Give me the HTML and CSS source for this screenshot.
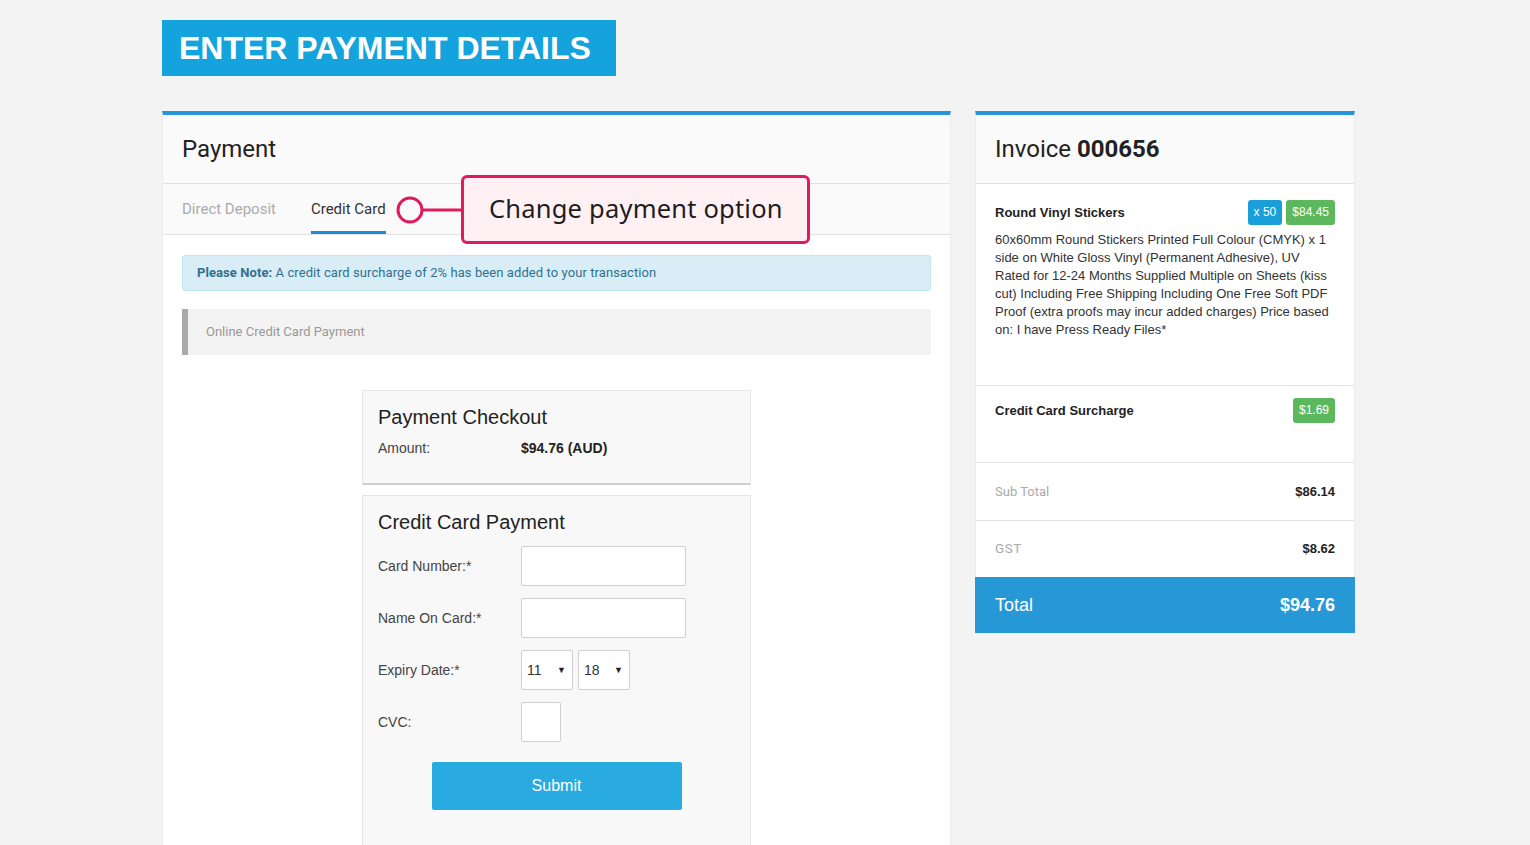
FILE: index.html
```html
<!DOCTYPE html>
<html lang="en">
<head>
<meta charset="utf-8">
<title>Enter Payment Details</title>
<link rel="stylesheet" href="styles.css">
</head>
<body>
<div class="page">
  <h1 class="page-title">ENTER PAYMENT DETAILS</h1>
  <div class="columns">
    <section class="panel panel-left">
      <div class="panel-head">Payment</div>
      <div class="tabs">
        <span class="tab">Direct Deposit</span>
        <span class="tab active">Credit Card</span>
        <div class="callout">
          <svg class="callout-pin" width="66" height="30" viewBox="0 0 66 30">
            <circle cx="15" cy="15" r="12" fill="none" stroke="#e01a5f" stroke-width="3"/>
            <line x1="27" y1="15" x2="66" y2="15" stroke="#e01a5f" stroke-width="3"/>
          </svg>
          <div class="callout-box">Change payment option</div>
        </div>
      </div>
      <div class="panel-body">
        <div class="alert"><b>Please Note:</b> A credit card surcharge of 2% has been added to your transaction</div>
        <div class="method">Online Credit Card Payment</div>
        <div class="checkout">
          <h2 class="box-title">Payment Checkout</h2>
          <div class="amount-row"><span class="lbl">Amount:</span><span class="amount">$94.76 (AUD)</span></div>
        </div>
        <div class="cc-box">
          <h2 class="box-title">Credit Card Payment</h2>
          <div class="form-row"><span class="lbl">Card Number:*</span><span class="input wide"></span></div>
          <div class="form-row"><span class="lbl">Name On Card:*</span><span class="input wide"></span></div>
          <div class="form-row"><span class="lbl">Expiry Date:*</span>
            <span class="select">11<i>&#9660;</i></span>
            <span class="select">18<i>&#9660;</i></span>
          </div>
          <div class="form-row"><span class="lbl">CVC:</span><span class="input small"></span></div>
          <div class="submit-wrap"><button class="submit">Submit</button></div>
        </div>
      </div>
    </section>
    <section class="panel panel-right">
      <div class="panel-head">Invoice <b>000656</b></div>
      <div class="inv-item">
        <div class="item-top">
          <span class="item-name">Round Vinyl Stickers</span>
          <span class="badges"><span class="badge blue">x 50</span><span class="badge green">$84.45</span></span>
        </div>
        <p class="item-desc">60x60mm Round Stickers Printed Full Colour (CMYK) x 1 side on White Gloss Vinyl (Permanent Adhesive), UV Rated for 12-24 Months Supplied Multiple on Sheets (kiss cut) Including Free Shipping Including One Free Soft PDF Proof (extra proofs may incur added charges) Price based on: I have Press Ready Files*</p>
      </div>
      <div class="inv-surcharge">
        <span class="item-name">Credit Card Surcharge</span>
        <span class="badge green">$1.69</span>
      </div>
      <div class="inv-line sub"><span class="muted">Sub Total</span><span class="val">$86.14</span></div>
      <div class="inv-line gst"><span class="muted">GST</span><span class="val">$8.62</span></div>
      <div class="inv-total"><span>Total</span><span class="total-val">$94.76</span></div>
    </section>
  </div>
</div>
</body>
</html>
```

FILE: styles.css
```css
* { box-sizing: border-box; }
html, body { margin: 0; padding: 0; }
body {
  background: #f3f3f3;
  font-family: Roboto, "Liberation Sans", Arial, sans-serif;
  color: #333;
  height: 845px;
  overflow: hidden;
}
.page {
  width: 1193px;
  margin-left: 162px;
  padding-top: 20px;
}
.page-title {
  margin: 0;
  width: 454px;
  height: 56px;
  line-height: 56px;
  padding-left: 17px;
  background: #14a3dc;
  color: #fff;
  font-family: "Liberation Sans", Arial, sans-serif;
  font-weight: bold;
  font-size: 32px;
}
.columns {
  display: flex;
  gap: 24px;
  margin-top: 35px;
  align-items: flex-start;
}
.panel {
  background: #fff;
  border-top: 4px solid #2596d6;
  border-left: 1px solid #ececec;
  border-right: 1px solid #ececec;
}
.panel-left { width: 789px; min-height: 740px; }
.panel-right { width: 380px; }
.panel-head {
  height: 69px;
  line-height: 68px;
  padding-left: 19px;
  font-size: 24px;
  color: #222;
  background: #fafafa;
  border-bottom: 1px solid #e2e2e2;
}
.panel-head b { font-weight: bold; }
.tabs {
  position: relative;
  height: 51px;
  background: #fafafa;
  border-bottom: 1px solid #e2e2e2;
  display: flex;
  gap: 35px;
  padding-left: 19px;
}
.tab {
  font-size: 15px;
  line-height: 47px;
  padding-top: 2px;
  color: #aaa;
  border-bottom: 3px solid transparent;
  height: 50px;
}
.tab.active { color: #333; border-bottom-color: #1a8fd0; }
.callout {
  position: absolute;
  left: 232px;
  top: -9px;
  display: flex;
  align-items: center;
}
.callout-pin { display: block; }
.callout-box {
  width: 349px;
  height: 69px;
  border: 3px solid #e01a5f;
  border-radius: 6px;
  background: #fff0f4;
  font-family: "Noto Sans", "Open Sans", sans-serif;
  font-size: 25.5px;
  color: #1e1e1e;
  line-height: 61px;
  padding-left: 25px;
  letter-spacing: 0.2px;
}
.panel-body { padding: 20px 19px 0 19px; }
.alert {
  height: 36px;
  line-height: 34px;
  background: #d9edf7;
  border: 1px solid #bce8f1;
  border-radius: 3px;
  color: #31708f;
  font-size: 13px;
  padding-left: 14px;
  letter-spacing: 0.08px;
}
.alert b { font-weight: bold; }
.method {
  margin-top: 18px;
  height: 46px;
  line-height: 46px;
  background: #f3f3f3;
  border-left: 6px solid #aaa;
  color: #999;
  font-size: 13px;
  padding-left: 18px;
}
.checkout, .cc-box {
  width: 389px;
  margin: 0 auto;
  background: #f8f8f8;
  border: 1px solid #e6e6e6;
  font-family: "Liberation Sans", Arial, sans-serif;
}
.checkout {
  margin-top: 35px;
  height: 95px;
  border-bottom: 2px solid #cfcfcf;
  padding: 13px 15px 0 15px;
}
.box-title {
  margin: 0;
  font-weight: normal;
  font-size: 20px;
  color: #222;
  line-height: 26px;
}
.amount-row {
  display: flex;
  margin-top: 9px;
  font-size: 14px;
  line-height: 18px;
}
.lbl { width: 143px; color: #444; font-size: 14px; flex: none; }
.amount { font-weight: bold; color: #222; }
.cc-box {
  margin-top: 10px;
  height: 360px;
  padding: 13px 15px 0 15px;
}
.cc-box .box-title { margin-bottom: 11px; }
.form-row {
  display: flex;
  align-items: center;
  height: 40px;
  margin-bottom: 12px;
  gap: 5px;
}
.form-row .lbl { margin-right: -5px; margin-top: -1px; }
.input {
  display: block;
  height: 40px;
  background: #fff;
  border: 1px solid #cfcfcf;
  border-radius: 2px;
}
.input.wide { width: 165px; }
.input.small { width: 40px; }
.select {
  display: flex;
  justify-content: space-between;
  align-items: center;
  width: 52px;
  height: 40px;
  background: #fff;
  border: 1px solid #cfcfcf;
  border-radius: 2px;
  padding: 0 6px 0 5px;
  font-size: 14px;
  color: #333;
}
.select i { font-style: normal; font-size: 9px; color: #222; }
.submit-wrap { display: flex; justify-content: center; margin-top: 20px; }
.submit {
  width: 250px;
  height: 48px;
  border: none;
  border-radius: 2px;
  background: #29aae1;
  color: #fff;
  font-family: "Liberation Sans", Arial, sans-serif;
  font-size: 16px;
}
.inv-item {
  height: 202px;
  padding: 16px 19px 0 19px;
  border-bottom: 1px solid #e2e2e2;
}
.item-top { display: flex; justify-content: space-between; align-items: center; }
.item-name {
  font-family: "Liberation Sans", Arial, sans-serif;
  font-weight: bold;
  font-size: 13px;
  color: #222;
}
.badges { display: flex; gap: 4px; }
.badge {
  display: inline-block;
  height: 25px;
  line-height: 25px;
  padding: 0 6px;
  border-radius: 3px;
  color: #fff;
  font-family: "Liberation Sans", Arial, sans-serif;
  font-size: 12px;
}
.badge.blue { background: #1a9fdb; }
.badge.green { background: #5cb85c; }
.item-desc {
  margin: 6px 0 0 0;
  font-size: 13px;
  line-height: 18px;
  color: #333;
  font-family: "Liberation Sans", Arial, sans-serif;
}
.inv-surcharge {
  height: 77px;
  padding: 12px 19px 0 19px;
  display: flex;
  justify-content: space-between;
  align-items: flex-start;
  border-bottom: 1px solid #e2e2e2;
}
.inv-surcharge .item-name { line-height: 25px; }
.inv-line {
  display: flex;
  justify-content: space-between;
  align-items: center;
  padding: 0 19px 0 19px;
  font-size: 13px;
}
.inv-line.sub { height: 58px; border-bottom: 1px solid #e2e2e2; }
.inv-line.gst { height: 56px; padding-bottom: 2px; }
.muted { color: #aaa; }
.gst .muted { font-size: 13.5px; letter-spacing: 0.5px; }
.val {
  font-family: "Liberation Sans", Arial, sans-serif;
  font-weight: bold;
  color: #222;
}
.inv-total {
  height: 56px;
  margin: 0 -1px;
  background: #2698d6;
  color: #fff;
  display: flex;
  justify-content: space-between;
  align-items: center;
  padding: 0 20px 0 20px;
  font-size: 18px;
  font-family: "Liberation Sans", Arial, sans-serif;
}
.total-val { font-weight: bold; }
```
